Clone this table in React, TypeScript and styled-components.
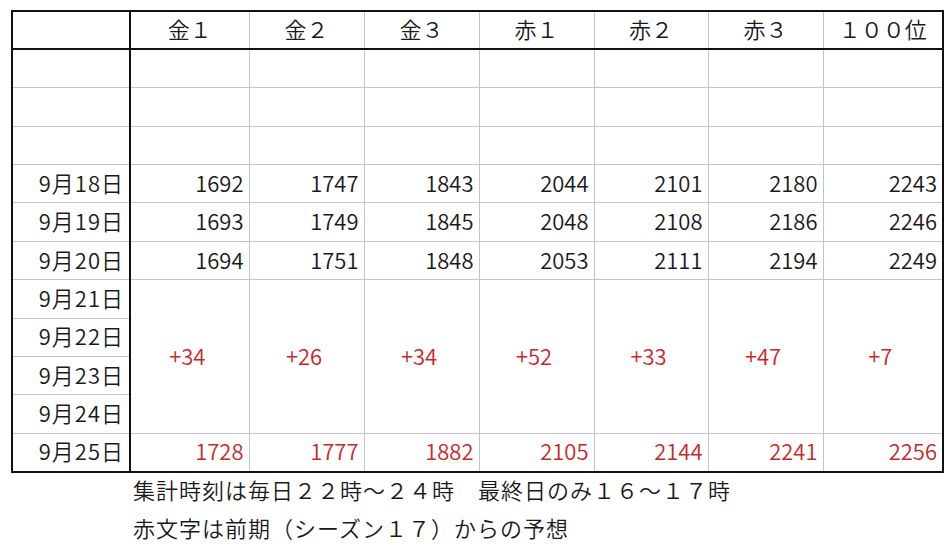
import React from "react";
import styled, {createGlobalStyle} from "styled-components";

const GlobalStyle = createGlobalStyle`
  html, body {
    margin: 0;
    padding: 0;
    background: #ffffff;
  }
  body {
    font-family: "Noto Sans CJK JP", "Noto Sans", sans-serif;
    font-weight: 350;
    color: #1a1a1a;
  }
`;

const GRID = "#c4c4c4";
const RED = "#c92828";
const COLUMNS = [118, 119, 115, 115, 115, 114, 115, 120];

const Page = styled.div`
  padding: 10px 0 0 11px;
  width: 951px;
  height: 547px;
  box-sizing: border-box;
`;

const Table = styled.table`
  border-collapse: collapse;
  table-layout: fixed;
  width: 931px;
  border: 2px solid #111111;
  font-size: 22px;
`;

const Row = styled.tr`
  height: 38.4px;
`;

const HeadCell = styled.th<{$first?: boolean}>`
  font-weight: 350;
  text-align: center;
  padding: 0 0 5px;
  line-height: 1;
  border-left: ${p => p.$first ? "none" : `1px solid ${GRID}`};
  border-right: ${p => p.$first ? "2px solid #111111" : "none"};
  border-bottom: 2px solid #111111;
`;

const DateCell = styled.td`
  text-align: right;
  padding: 0 5px 4px 0;
  line-height: 1;
  letter-spacing: 1px;
  border-right: 2px solid #111111;
  border-top: 1px solid ${GRID};
  white-space: nowrap;
`;

const ValueCell = styled.td<{$red?: boolean, $center?: boolean}>`
  text-align: ${p => p.$center ? "center" : "right"};
  padding: 0 5px 4px 0;
  line-height: 1;
  color: ${p => p.$red ? RED : "inherit"};
  border: 1px solid ${GRID};
  border-right: none;
`;

const Notes = styled.div`
  margin: -3px 0 0 122px;
  font-size: 22px;
  line-height: 38px;
  letter-spacing: 1px;
`;

const headers = ["金１", "金２", "金３", "赤１", "赤２", "赤３", "１００位"];

const measured: [string, number[]][] = [
    ["9月18日", [1692, 1747, 1843, 2044, 2101, 2180, 2243]],
    ["9月19日", [1693, 1749, 1845, 2048, 2108, 2186, 2246]],
    ["9月20日", [1694, 1751, 1848, 2053, 2111, 2194, 2249]],
];

const gains = ["+34", "+26", "+34", "+52", "+33", "+47", "+7"];
const forecast = [1728, 1777, 1882, 2105, 2144, 2241, 2256];

export default function App() {
    return (
        <Page>
            <GlobalStyle/>
            <Table>
                <colgroup>
                    {COLUMNS.map((w, i) => <col key={i} style={{width: w}}/>)}
                </colgroup>
                <thead>
                    <Row>
                        <HeadCell $first/>
                        {headers.map(h => <HeadCell key={h}>{h}</HeadCell>)}
                    </Row>
                </thead>
                <tbody>
                    {[0, 1, 2].map(i => (
                        <Row key={`blank-${i}`}>
                            <DateCell/>
                            {headers.map(h => <ValueCell key={h}/>)}
                        </Row>
                    ))}

                    {measured.map(([date, values]) => (
                        <Row key={date}>
                            <DateCell>{date}</DateCell>
                            {values.map((v, i) => <ValueCell key={i}>{v}</ValueCell>)}
                        </Row>
                    ))}

                    <Row>
                        <DateCell>9月21日</DateCell>
                        {gains.map((g, i) => (
                            <ValueCell key={i} rowSpan={4} $red $center>{g}</ValueCell>
                        ))}
                    </Row>
                    <Row><DateCell>9月22日</DateCell></Row>
                    <Row><DateCell>9月23日</DateCell></Row>
                    <Row><DateCell>9月24日</DateCell></Row>

                    <Row>
                        <DateCell>9月25日</DateCell>
                        {forecast.map((v, i) => <ValueCell key={i} $red>{v}</ValueCell>)}
                    </Row>
                </tbody>
            </Table>
            <Notes>
                <div>集計時刻は毎日２２時～２４時　最終日のみ１６～１７時</div>
                <div>赤文字は前期（シーズン１７）からの予想</div>
            </Notes>
        </Page>
    );
}
